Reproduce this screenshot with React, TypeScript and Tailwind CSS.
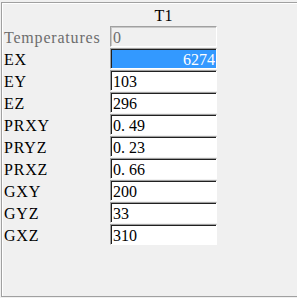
import React from 'react';

const rows = [
  { label: 'Temperatures', value: '0', disabled: true },
  { label: 'EX', value: '6274', selected: true },
  { label: 'EY', value: '103' },
  { label: 'EZ', value: '296' },
  { label: 'PRXY', value: '0. 49' },
  { label: 'PRYZ', value: '0. 23' },
  { label: 'PRXZ', value: '0. 66' },
  { label: 'GXY', value: '200' },
  { label: 'GYZ', value: '33' },
  { label: 'GXZ', value: '310' },
];

const Cell = ({ value, disabled, selected }: { value: string; disabled?: boolean; selected?: boolean }) => {
  if (disabled) {
    return (
      <div className="h-[21px] w-[107px] border-t border-l border-[#a0a0a0] border-b border-r border-b-white border-r-white">
        <div className="h-full flex items-center pl-[1px] pt-[1px] bg-[#f0f0f0] text-[#6d6d6d] border-t border-l border-[#c8c8c8] border-b-0 border-r-0">
          {value}
        </div>
      </div>
    );
  }
  return (
    <div className="h-[21px] w-[107px] border-t border-l border-[#a0a0a0] border-b border-r border-b-white border-r-white">
      <div
        className={`h-full flex items-center pt-[1px] border-t border-l border-[#202020] whitespace-pre ${
          selected ? 'bg-[#3399ff] text-white justify-end pr-[1px]' : 'bg-white text-black pl-[1px]'
        }`}
      >
        {value}
      </div>
    </div>
  );
};

export default function App() {
  return (
    <div
      className="w-[297px] h-[298px] bg-[#f0f0f0] pt-[2px] pl-[1px] overflow-hidden text-[16px] leading-none"
      style={{ fontFamily: '"Liberation Serif", "Noto Sans CJK SC", serif' }}
    >
      <div className="h-[295px] border-t border-l border-b border-[#a0a0a0] shadow-[inset_1px_1px_0_#ffffff]">
        <div className="grid grid-cols-[108px_107px] pt-[1px]">
          <div className="h-[22px]" />
          <div className="h-[22px] flex items-center justify-center pt-[2px]">T1</div>
          {rows.map((r, i) => (
            <React.Fragment key={i}>
              <div
                className={`h-[22px] flex items-center pl-[2px] pt-[1px] tracking-[0.8px] ${
                  r.disabled ? 'text-[#6d6d6d]' : 'text-black'
                }`}
              >
                {r.label}
              </div>
              <div className="h-[22px]">
                <Cell value={r.value} disabled={r.disabled} selected={r.selected} />
              </div>
            </React.Fragment>
          ))}
        </div>
      </div>
    </div>
  );
}
